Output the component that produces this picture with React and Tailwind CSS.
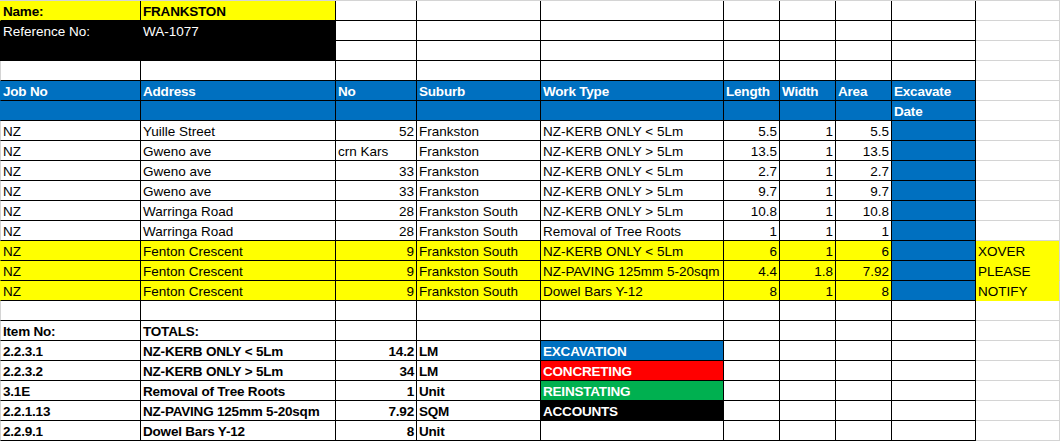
import React from "react";

const Y = "yellow";
const B = "blue";
const K = "black";
const R = "red";
const G = "green";

const bgClass = {
  white: "bg-white",
  yellow: "bg-[#ffff00]",
  blue: "bg-[#0070c0]",
  black: "bg-black",
  red: "bg-[#ff0000]",
  green: "bg-[#00b050]",
};

const blBorder = {
  white: "border-l-[#d4d4d4]",
  yellow: "border-l-[#ffff00]",
  blue: "border-l-[#0070c0]",
  black: "border-l-black",
  red: "border-l-[#ff0000]",
  green: "border-l-[#00b050]",
};

function c(t = "", o = {}) {
  return { t, ...o };
}

function dataRow(job, addr, no, sub, work, len, wid, area, note, yellow) {
  const bg = yellow ? Y : "white";
  return [
    c(job, { bg }),
    c(addr, { bg }),
    c(no, { bg, right: typeof no === "number" }),
    c(sub, { bg }),
    c(work, { bg }),
    c(len, { bg, right: true }),
    c(wid, { bg, right: true }),
    c(area, { bg, right: true }),
    c("", { bg: B }),
    c(note, { bg: yellow ? Y : "white", grid: true }),
  ];
}

function header(texts) {
  return texts.map((t, i) =>
    i < 9 ? c(t, { bg: B, bold: true, white: true }) : c("", { grid: true })
  );
}

function totalRow(item, desc, qty, unit, legend) {
  return [
    c(item, { bold: true }),
    c(desc, { bold: true }),
    c(qty, { bold: true, right: true }),
    c(unit, { bold: true }),
    legend ? c(legend[0], { bg: legend[1], bold: true, white: true }) : c(""),
    c(""),
    c(""),
    c(""),
    c(""),
    c("", { grid: true }),
  ];
}

function plain(cells) {
  const out = [];
  for (let i = 0; i < 10; i++) {
    if (i === 9) out.push(c("", { grid: true }));
    else out.push(cells[i] || c(""));
  }
  return out;
}

const rows = [
  plain([
    c("Name:", { bg: Y, bold: true }),
    c("FRANKSTON", { bg: Y, bold: true }),
  ]),
  plain([
    c("Reference No:", { bg: K, white: true }),
    c("WA-1077", { bg: K, white: true }),
  ]),
  plain([c("", { bg: K }), c("", { bg: K })]),
  plain([]),
  header([
    "Job No",
    "Address",
    "No",
    "Suburb",
    "Work Type",
    "Length",
    "Width",
    "Area",
    "Excavate",
    "",
  ]),
  header(["", "", "", "", "", "", "", "", "Date", ""]),
  dataRow("NZ", "Yuille Street", 52, "Frankston", "NZ-KERB ONLY < 5Lm", "5.5", "1", "5.5", ""),
  dataRow("NZ", "Gweno ave", "crn Kars", "Frankston", "NZ-KERB ONLY > 5Lm", "13.5", "1", "13.5", ""),
  dataRow("NZ", "Gweno ave", 33, "Frankston", "NZ-KERB ONLY < 5Lm", "2.7", "1", "2.7", ""),
  dataRow("NZ", "Gweno ave", 33, "Frankston", "NZ-KERB ONLY > 5Lm", "9.7", "1", "9.7", ""),
  dataRow("NZ", "Warringa Road", 28, "Frankston South", "NZ-KERB ONLY > 5Lm", "10.8", "1", "10.8", ""),
  dataRow("NZ", "Warringa Road", 28, "Frankston South", "Removal of Tree Roots", "1", "1", "1", ""),
  dataRow("NZ", "Fenton Crescent", 9, "Frankston South", "NZ-KERB ONLY < 5Lm", "6", "1", "6", "XOVER", true),
  dataRow("NZ", "Fenton Crescent", 9, "Frankston South", "NZ-PAVING 125mm 5-20sqm", "4.4", "1.8", "7.92", "PLEASE", true),
  dataRow("NZ", "Fenton Crescent", 9, "Frankston South", "Dowel Bars Y-12", "8", "1", "8", "NOTIFY", true),
  plain([]),
  plain([c("Item No:", { bold: true }), c("TOTALS:", { bold: true })]),
  totalRow("2.2.3.1", "NZ-KERB ONLY < 5Lm", "14.2", "LM", ["EXCAVATION", B]),
  totalRow("2.2.3.2", "NZ-KERB ONLY > 5Lm", "34", "LM", ["CONCRETING", R]),
  totalRow("3.1E", "Removal of Tree Roots", "1", "Unit", ["REINSTATING", G]),
  totalRow("2.2.1.13", "NZ-PAVING 125mm 5-20sqm", "7.92", "SQM", ["ACCOUNTS", K]),
  totalRow("2.2.9.1", "Dowel Bars Y-12", "8", "Unit"),
];

function Cell({ cell, col }) {
  const bg = cell.bg || "white";
  let border;
  if (col === 9) {
    border =
      bg === Y
        ? "border-r border-b border-r-[#d4d4d4] border-b-[#ffff00]"
        : "border-r border-b border-[#d4d4d4]";
  } else {
    border = "border-r border-b border-black";
  }
  const left = col === 0 ? `border-l ${blBorder[bg]}` : "";
  return (
    <div
      className={[
        "h-5 whitespace-nowrap overflow-visible px-[2px] pt-[1px] leading-[19px]",
        bgClass[bg],
        border,
        left,
        cell.right ? "text-right" : "text-left",
        cell.bold ? "font-bold tracking-[-0.2px]" : "font-normal",
        cell.white ? "text-white" : "text-black",
      ].join(" ")}
    >
      {cell.t}
    </div>
  );
}

export default function App() {
  return (
    <div className="w-[1060px] h-[441px] overflow-hidden bg-white font-['Liberation_Sans',Arial,sans-serif] text-[13.5px]">
      <div className="border-t border-[#d4d4d4] grid grid-cols-[141px_195px_81px_124px_183px_56px_56px_56px_84px_84px]">
        {rows.map((row, ri) =>
          row.map((cell, ci) => <Cell key={`${ri}-${ci}`} cell={cell} col={ci} />)
        )}
      </div>
    </div>
  );
}
